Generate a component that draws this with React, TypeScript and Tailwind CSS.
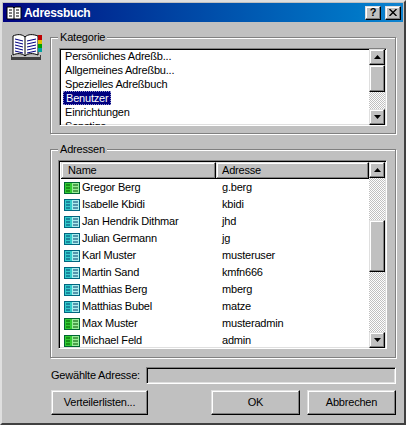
import React from 'react';

const categories = [
  'Persönliches Adreßb...',
  'Allgemeines Adreßbu...',
  'Spezielles Adreßbuch',
  'Benutzer',
  'Einrichtungen',
  'Sonstige',
];

type Address = { name: string; login: string; green?: boolean };

const addresses: Address[] = [
  { name: 'Gregor Berg', login: 'g.berg', green: true },
  { name: 'Isabelle Kbidi', login: 'kbidi' },
  { name: 'Jan Hendrik Dithmar', login: 'jhd' },
  { name: 'Julian Germann', login: 'jg' },
  { name: 'Karl Muster', login: 'musteruser' },
  { name: 'Martin Sand', login: 'kmfn666' },
  { name: 'Matthias Berg', login: 'mberg' },
  { name: 'Matthias Bubel', login: 'matze' },
  { name: 'Max Muster', login: 'musteradmin', green: true },
  { name: 'Michael Feld', login: 'admin', green: true },
];

const raised = 'bg-[#c0c0c0] border-t border-l border-t-[#dfdfdf] border-l-[#dfdfdf] border-r border-b border-r-black border-b-black shadow-[inset_-1px_-1px_0_#808080,inset_1px_1px_0_#fff]';
const sunken = 'shadow-[inset_1px_1px_0_#000,inset_-1px_-1px_0_#dfdfdf] border border-t-[#808080] border-l-[#808080] border-r-white border-b-white';

const CardIcon = ({ green }: { green?: boolean }) => (
  <svg width="16" height="12" viewBox="0 0 16 12" className="shrink-0">
    <rect x="0.5" y="0.5" width="15" height="11" fill={green ? '#33cc33' : '#33cccc'} stroke={green ? '#006633' : '#006680'} />
    <rect x="8" y="1" width="7" height="10" fill={green ? '#99ee99' : '#aaeeee'} />
    <path d="M2 3h4M2 6h4M2 9h4M9 3h5M9 6h5M9 9h5" stroke={green ? '#005500' : '#003f6f'} strokeWidth="1" />
  </svg>
);

const BookIcon = () => (
  <svg width="32" height="27" viewBox="0 0 32 27">
    <path d="M0 22h30v5H0z" fill="#404040" />
    <path d="M1 22h28v2H1z" fill="#c0c0c0" />
    <path d="M2 3c4-2 9-2 12 1c3-3 8-3 13-1v19c-5-2-10-2-13 1c-3-3-8-3-12-1z" fill="#fff" stroke="#000" strokeWidth="1" />
    <path d="M14 4v19" stroke="#000" />
    <path d="M4 6l8 2M4 9l8 2M4 12l8 2M4 15l8 2M4 18l8 2M25 6l-9 2M25 9l-9 2M25 12l-9 2M25 15l-9 2M25 18l-9 2" stroke="#000080" />
    <rect x="27" y="2" width="4" height="5" fill="#c00000" />
    <rect x="27" y="7" width="4" height="4" fill="#e0c000" />
    <rect x="27" y="11" width="4" height="4" fill="#00a000" />
    <rect x="27" y="15" width="4" height="4" fill="#00a0a0" />
  </svg>
);

const SmallBook = () => (
  <svg width="16" height="14" viewBox="0 0 16 14" className="shrink-0">
    <path d="M1 1h6l1 1l1-1h6v12H1z" fill="#fff" stroke="#000" />
    <path d="M8 2v11" stroke="#000" />
    <path d="M3 4h3M3 7h3M3 10h3M10 4h3M10 7h3M10 10h3" stroke="#000" />
  </svg>
);

const Arrow = ({ up }: { up?: boolean }) => (
  <svg width="7" height="4" viewBox="0 0 7 4">
    <path d={up ? 'M3.5 0L7 4H0z' : 'M0 0h7L3.5 4z'} fill="#000" />
  </svg>
);

const ScrollButton = ({ up }: { up?: boolean }) => (
  <div className={`${raised} h-[16px] w-[16px] shrink-0 flex items-center justify-center`}>
    <Arrow up={up} />
  </div>
);

const Track = ({ className }: { className: string }) => (
  <div className={`${className} bg-[repeating-conic-gradient(#c0c0c0_0_25%,#fff_0_50%)] bg-[length:2px_2px]`} />
);

const Scrollbar = ({ before, thumb, after }: { before: string; thumb: string; after: string }) => (
  <div className="flex flex-col w-[16px] shrink-0">
    <ScrollButton up />
    <Track className={before} />
    <div className={`${raised} ${thumb} shrink-0`} />
    <Track className={after} />
    <ScrollButton />
  </div>
);

const Group = ({ title, className, children }: { title: string; className: string; children: React.ReactNode }) => (
  <div className={`relative border border-[#808080] shadow-[inset_1px_1px_0_#fff,1px_1px_0_#fff] ${className}`}>
    <span className="absolute left-[7px] top-[-8px] bg-[#c0c0c0] px-[2px] leading-[14px]">{title}</span>
    {children}
  </div>
);

const Button = ({ className, children }: { className: string; children: React.ReactNode }) => (
  <div className={`${raised} h-[25px] flex items-center justify-center ${className}`}>{children}</div>
);

export default function App() {
  return (
    <div className="w-[406px] h-[425px] overflow-hidden bg-[#c0c0c0] border-2 border-t-[#dfdfdf] border-l-[#dfdfdf] border-r-[#404040] border-b-[#404040] p-px font-['Liberation_Sans',sans-serif] text-[11px] tracking-[-0.2px] text-black flex flex-col">
      {/* Title bar */}
      <div className="h-[19px] shrink-0 flex items-center pl-[3px] pr-[2px] gap-[2px] bg-gradient-to-r from-[#000080] to-[#1084d0]">
        <SmallBook />
        <span className="flex-1 text-white font-bold text-[12px] tracking-[-0.3px]">Adressbuch</span>
        <div className={`${raised} w-[16px] h-[14px] flex items-center justify-center font-bold text-[11px] leading-none`}>?</div>
        <div className={`${raised} w-[16px] h-[14px] ml-[2px] flex items-center justify-center`}>
          <svg width="8" height="7" viewBox="0 0 8 7">
            <path d="M0.5 0L7.5 7M7.5 0L0.5 7" stroke="#000" strokeWidth="1.4" />
          </svg>
        </div>
      </div>

      <div className="flex-1 flex flex-col pt-[11px] pl-[5px] pr-[7px]">
        <div className="flex">
          <div className="w-[44px] shrink-0 pl-[3px]">
            <BookIcon />
          </div>
          <Group title="Kategorie" className="flex-1 h-[97px] mt-[4px] pl-[8px] pr-[8px] pt-[10px] ml-[-2px]">
            <div className={`${sunken} bg-white h-[78px] flex overflow-hidden pr-px`}>
              <div className="flex-1 pl-[5px] leading-[14px] overflow-hidden">
                {categories.map((c) => (
                  <div key={c} className="h-[14px] flex">
                    <span className={c === 'Benutzer' ? 'bg-[#000080] text-white px-[2px] -ml-[2px] border border-dotted border-[#9090c8] leading-[12px]' : ''}>{c}</span>
                  </div>
                ))}
              </div>
              <Scrollbar before="h-0" thumb="h-[27px]" after="flex-1" />
            </div>
          </Group>
        </div>

        <div className="flex mt-[15px]">
          <div className="w-[42px] shrink-0" />
          <Group title="Adressen" className="flex-1 h-[209px] pl-[7px] pr-[8px] pt-[10px]">
            <div className={`${sunken} bg-white h-[189px] flex overflow-hidden pl-[2px] pt-px pr-px`}>
              <div className="flex-1 min-w-0 flex flex-col">
                <div className="h-[17px] shrink-0 flex border-b border-black">
                  <div className={`${raised} w-[155px] flex items-center pl-[6px] border-b-0`}>Name</div>
                  <div className={`${raised} flex-1 flex items-center pl-[5px] border-b-0`}>Adresse</div>
                </div>
                <div className="flex flex-col">
                  {addresses.map((a) => (
                    <div key={a.name} className="h-[17px] flex items-center pl-[3px]">
                      <CardIcon green={a.green} />
                      <span className="w-[142px] pl-[2px] shrink-0 whitespace-nowrap">{a.name}</span>
                      <span className="whitespace-nowrap">{a.login}</span>
                    </div>
                  ))}
                </div>
              </div>
              <Scrollbar before="h-[42px]" thumb="h-[52px]" after="flex-1" />
            </div>
          </Group>
        </div>

        <div className="flex items-center mt-[9px] ml-[43px] h-[17px]">
          <span className="w-[95px] shrink-0 whitespace-nowrap">Gewählte Adresse:</span>
          <div className={`${sunken} bg-[#c0c0c0] flex-1 h-[17px]`} />
        </div>

        <div className="flex mt-[6px] ml-[43px]">
          <Button className="w-[97px]">Verteilerlisten...</Button>
          <Button className="w-[89px] ml-[63px]">OK</Button>
          <Button className="w-[89px] ml-[7px]">Abbrechen</Button>
        </div>
      </div>
    </div>
  );
}
